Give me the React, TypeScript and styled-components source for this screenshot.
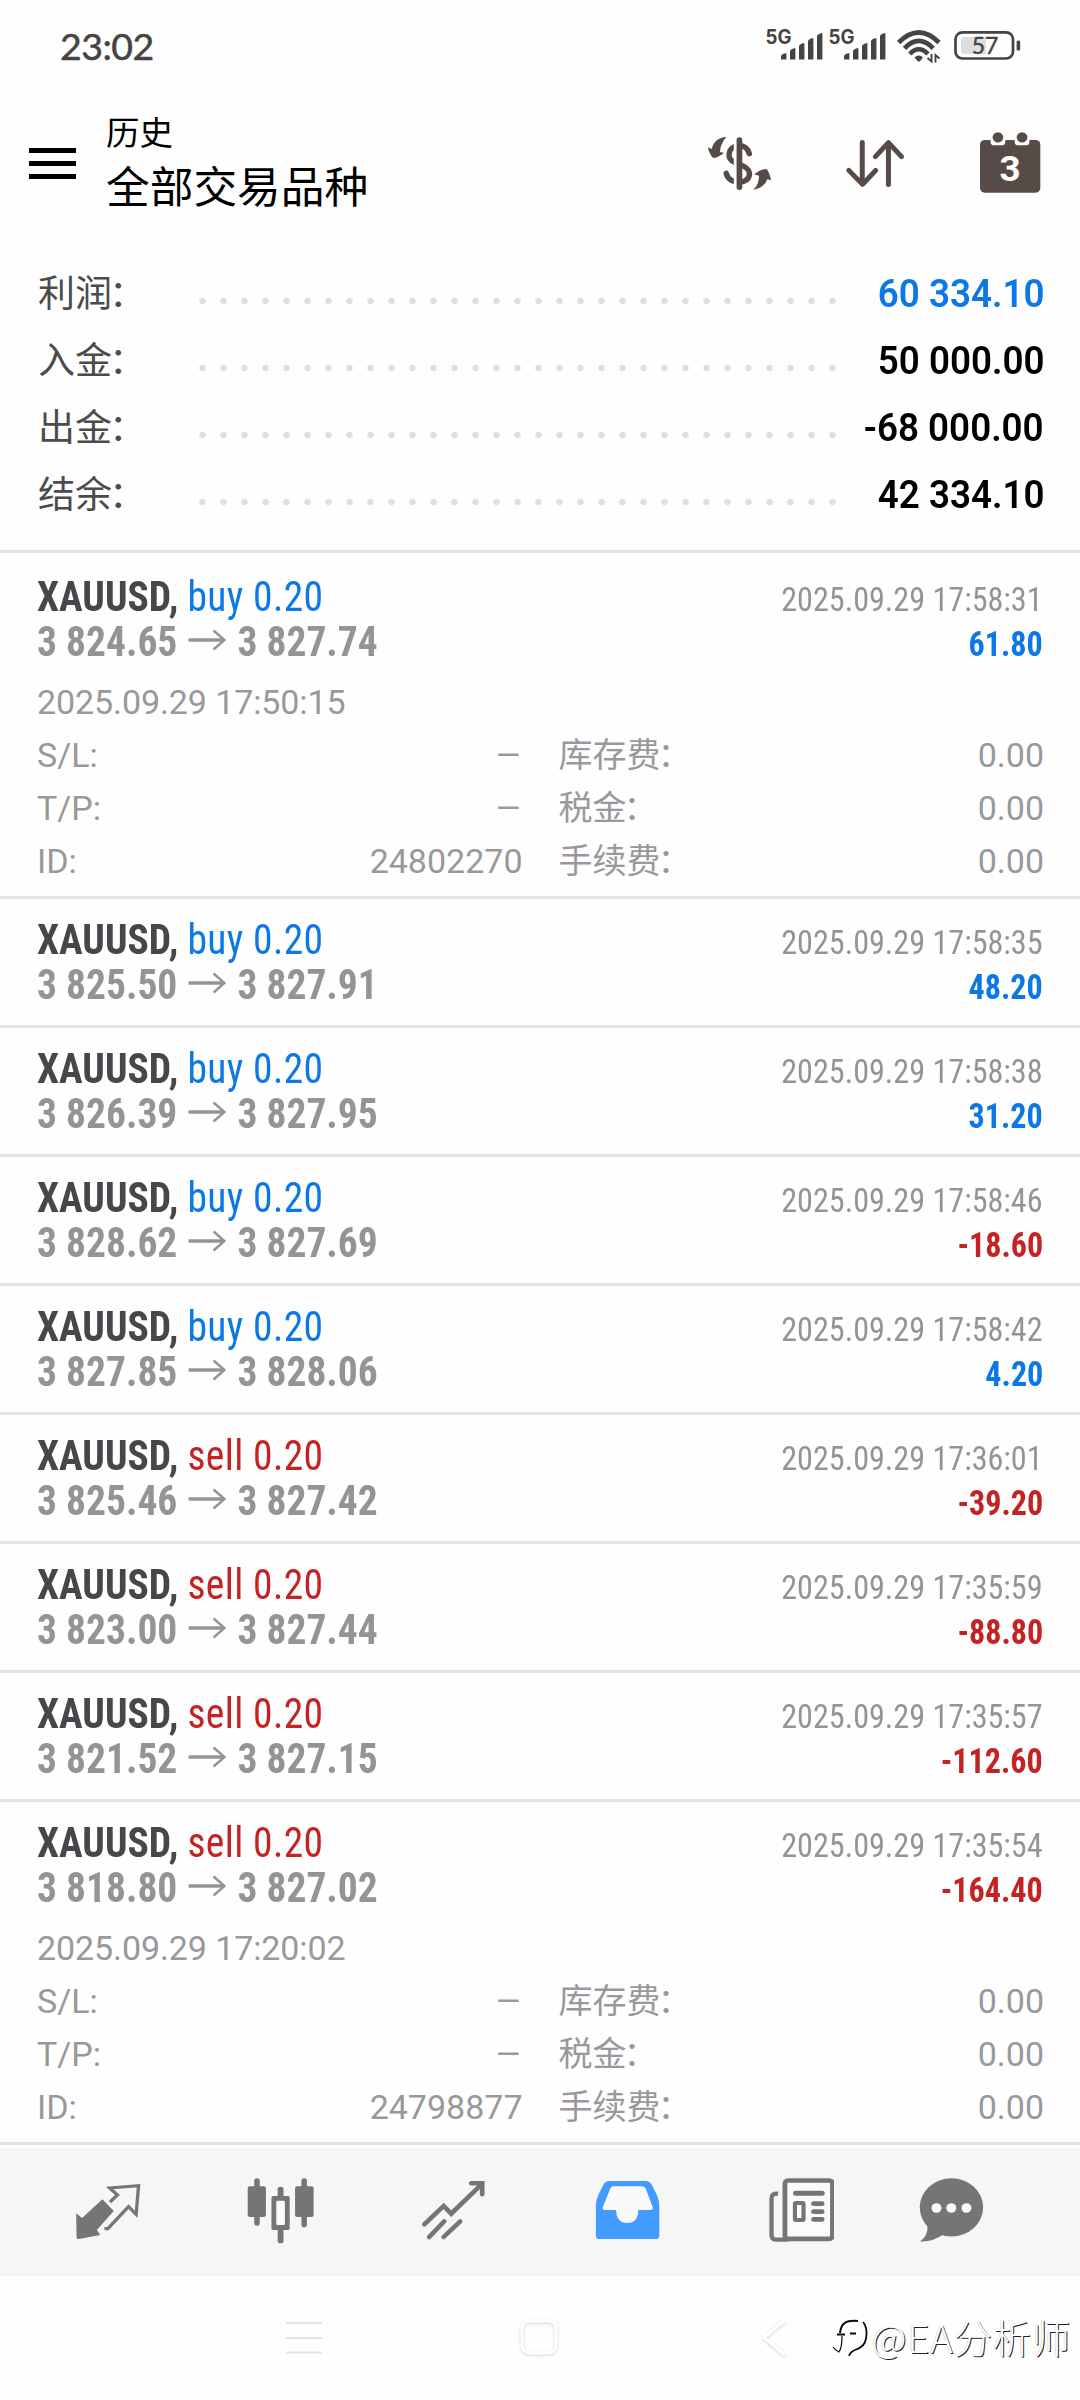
import React from 'react';
import styled, { createGlobalStyle } from 'styled-components';

const CJK = '"Noto Sans CJK SC", sans-serif';
const BG = '#fefefe';
const BLUE = '#0b78e6';
const RED = '#c42323';
const GRAY = '#949496';
const HEAD_ICON = '#574b48';
const NAV_ICON = '#757575';

const Global = createGlobalStyle`
  * { box-sizing: border-box; }
  body { margin: 0; background: ${BG}; font-family: Roboto, ${CJK}; }
`;

const Screen = styled.div`
  width: 1080px;
  height: 2400px;
  background: ${BG};
  display: flex;
  flex-direction: column;
  overflow: hidden;
`;

const StatusBar = styled.div`
  height: 100px;
  padding: 20px 50px 0 60px;
  display: flex;
  justify-content: space-between;
  align-items: flex-start;
`;
const Clock = styled.div`
  font: 400 37.5px/51px Lato, sans-serif;
  letter-spacing: -0.5px;
  color: #444;
  -webkit-text-stroke: 0.5px #444;
`;

const Header = styled.header`
  height: 127px;
  padding: 0 3px 0 29px;
  display: flex;
  align-items: center;
`;
const Burger = styled.div`
  width: 47px;
  display: flex;
  flex-direction: column;
  gap: 8px;
`;
const Bar = styled.i`
  height: 5px;
  background: #000;
`;
const Titles = styled.div`
  margin-left: 30px;
  padding-bottom: 8px;
  flex: 1;
  color: #000;
  font-family: ${CJK};
`;
const Caption = styled.div`
  font-size: 33.5px;
  line-height: 50px;
`;
const Title = styled.div`
  font-size: 43.7px;
  line-height: 57px;
`;
const Action = styled.div`
  width: 135px;
  display: flex;
  justify-content: center;
`;

const Summary = styled.section`
  height: 326px;
  padding: 33px 36px 0;
  border-bottom: 3px solid #e3e3e3;
`;
const SummaryRow = styled.div`
  display: flex;
  height: 67px;
  line-height: 67px;
  align-items: baseline;
`;
const SummaryLabel = styled.span`
  width: 156px;
  padding-left: 2px;
  font-size: 37px;
  color: #4b4b4d;
`;
const Colon = styled.span`
  margin-left: -3px;
`;
const Dots = styled.span`
  width: 651px;
  height: 67px;
  align-self: stretch;
  background: radial-gradient(circle at center, #dedede 2.8px, transparent 3.7px) 0 37px / 21px 8px repeat-x;
`;
const SummaryValue = styled.span<{ $color: string }>`
  margin-left: auto;
  font-size: 38.5px;
  font-weight: 600;
  color: ${p => p.$color};
  transform: scaleX(0.955);
  transform-origin: right;
`;

const Deal = styled.article<{ $first?: boolean; $open?: boolean }>`
  height: ${p => (p.$open ? 343 : 129)}px;
  padding: 18px 37px 0;
  border-top: 3px solid ${p => (p.$first ? 'transparent' : '#e3e3e3')};
`;
const Line = styled.div`
  display: flex;
  justify-content: space-between;
  align-items: baseline;
  height: 45px;
  line-height: 45px;
  font-family: "Roboto Condensed", Roboto, sans-serif;
  font-size: 42px;
  white-space: pre;
`;
const Left = styled.span`
  transform: scaleX(0.94);
  transform-origin: left;
`;
const Symbol = styled.b`
  color: #47474b;
`;
const Side = styled.span<{ $color: string }>`
  letter-spacing: 0.4px;
  color: ${p => p.$color};
`;
const Prices = styled.b`
  color: #949496;
`;
const Arrow = styled.svg`
  width: 40px;
  height: 22px;
  margin: 0 12px;
  vertical-align: 5px;
`;
const CloseTime = styled.span`
  font-size: 34px;
  color: ${GRAY};
  transform: scaleX(0.945);
  transform-origin: right;
`;
const Profit = styled.b<{ $color: string }>`
  font-size: 34.5px;
  color: ${p => p.$color};
  transform: scaleX(0.93);
  transform-origin: right;
`;

const Details = styled.div`
  margin-top: 12px;
  margin-right: -1px;
  display: grid;
  grid-template-columns: 1fr 1fr;
  grid-auto-rows: 53px;
  column-gap: 36px;
  font-size: 34px;
  line-height: 53px;
  color: #99999b;
`;
const OpenTime = styled.div`
  grid-column: 1 / -1;
  letter-spacing: -0.1px;
`;
const Field = styled.div`
  display: flex;
  justify-content: space-between;
  align-items: baseline;
`;
const Dash = styled.span`
  transform: scaleX(1.22);
  transform-origin: right;
`;

const TabBar = styled.nav`
  height: 134px;
  border-top: 3px solid #e0e0e0;
  padding: 0 0 2px 21.5px;
  display: flex;
  align-items: center;
  background: linear-gradient(#fdfdfd 3px, #f6f6f6 3px);
`;
const Tab = styled.div<{ $w?: number }>`
  width: ${p => p.$w || 173}px;
  display: flex;
  justify-content: center;
  padding-top: 2px;
`;
const SystemNav = styled.div`
  position: relative;
  flex: 1;
  padding: 0 0 1px 186.5px;
  display: grid;
  grid-template-columns: repeat(3, 235px);
  place-items: center;
`;
const Soft = styled.svg`
  filter: drop-shadow(0 1px 1.5px rgba(0, 0, 0, 0.18));
`;
const Watermark = styled.div`
  position: absolute;
  right: 9px;
  top: 32px;
  display: flex;
  align-items: center;
  gap: 3px;
  font: 300 38.5px/56px ${CJK};
  letter-spacing: 0.7px;
  color: #fff;
  text-shadow: 1px 1px 0 #222, -0.5px -0.5px 0 #ccc;
`;

const icon = (x: number, y: number, h: number) => ({
  viewBox: `${x} ${y} 200 ${h}`,
  width: 68.9,
  height: h / 3,
  preserveAspectRatio: 'none',
});

const Signal = ({ x }: { x: number }) => (
  <g fill="#444">
    <text x={x - 15.5} y="44" fontFamily="Inter, sans-serif" fontWeight="700" fontSize="19.5" textLength="26" lengthAdjust="spacingAndGlyphs">5G</text>
    {[53, 48, 43, 38, 33].map((top, i) => {
      const l = x + i * 9;
      return <path key={top} d={`M${l} 59.5V${top + 3}Q${l + 1} ${top + 0.5} ${l + 5.4} ${top}V59.5Z`} />;
    })}
  </g>
);

const StatusIcons = () => (
  <svg width="270" height="50" viewBox="760 20 270 50">
    <Signal x={781} />
    <Signal x={844} />
    <g fill="none" stroke="#444" strokeWidth="4.6">
      <path d="M898.6 42.5Q918.8 22.5 939 42.5" />
      <path d="M904.5 48.3Q918.8 33.5 933.2 48.3" />
      <path d="M909.8 54Q918.8 44.5 928 54" />
    </g>
    <path d="M914.5 57.5Q918.8 53.5 923 57.5L919.8 61.3Q918.8 62 917.8 61.3Z" fill="#444" />
    <path d="M931.5 54V61.5L927.5 58M935.5 62.5V55L939.5 58.5" fill="none" stroke="#444" strokeWidth="1.9" />
    <rect x="955.5" y="32.3" width="57.5" height="26.2" rx="7" fill="none" stroke="#444" strokeWidth="2.7" />
    <path d="M965 37H986V54H965Q961 54 961 50V41Q961 37 965 37Z" fill="#dedede" />
    <rect x="1016.6" y="40.5" width="3.6" height="10" rx="1.6" fill="#444" />
    <text x="985" y="54" textAnchor="middle" fontFamily="Lato, sans-serif" fontSize="23" fill="#444" stroke="#444" strokeWidth="0.4">57</text>
  </svg>
);

const MoneyIcon = () => (
  <svg {...icon(479.3, 393, 195)} fill={HEAD_ICON}>
    <path d="M608 461C603 444 592 437 578 437C544 438 540 479 566 487L592 499C618 512 612 545 580 546C558 546 545 536 541 520" fill="none" stroke={HEAD_ICON} strokeWidth="16" strokeLinecap="round" />
    <rect x="563" y="410" width="12" height="162" fill={BG} />
    <rect x="571" y="412" width="16.500" height="158" rx="8" />
    <path d="M541 411C520 412 503 425 499 447L488 442C490 458 497 468 503 474C515 474 525 465 535 459L523 456C523 440 530 425 541 411Z" />
    <path d="M619 569C640 565 655 555 660 538L671 541C668 525 665 515 658 507C645 507 632 515 622 523L636 527C636 545 630 560 619 569Z" />
  </svg>
);
const SortIcon = () => (
  <svg {...icon(871.4, 393, 195)} fill="none" stroke={HEAD_ICON} strokeWidth="14.500" strokeLinecap="round" strokeLinejoin="round">
    <path d="M936 427V552M897 511L937 553L975 511M1012 554V428M974 470L1012 428L1050 470" />
  </svg>
);
const CalendarIcon = () => (
  <svg {...icon(1263.4, 393, 195)} fill={HEAD_ICON}>
    <rect x="1278" y="420" width="175" height="158" rx="14" />
    {[1330, 1400].map(x => (
      <g key={x}>
        <rect x={x - 21.500} y="400" width="43" height="36" rx="11" fill={BG} />
        <circle cx={x} cy="412" r="15.500" />
      </g>
    ))}
    <text x="1365.500" y="544" textAnchor="middle" fontFamily="Roboto, sans-serif" fontWeight="700" fontSize="107" fill="#fff">3</text>
  </svg>
);

const QuotesIcon = () => (
  <svg {...icon(213.6, 138, 210)}>
    <path d="M296 208L329 243L280 300L290 315L228 327Q220 327 221 320L220 250L237 264Z" fill={NAV_ICON} />
    <path d="M318 216L340 195L317 174L401 167L394 253L372 230L312 296H302" fill="none" stroke={NAV_ICON} strokeWidth="9.500" />
  </svg>
);
const ChartIcon = () => (
  <svg {...icon(716, 138, 210)} fill={NAV_ICON}>
    <rect x="737" y="145" width="16" height="142" rx="8" />
    <rect x="718" y="169" width="53" height="92" rx="6" />
    <rect x="874" y="145" width="16" height="147" rx="8" />
    <rect x="855.500" y="169" width="54" height="92" rx="6" />
    <rect x="805" y="170" width="17" height="170" rx="8" />
    <rect x="787" y="198" width="53" height="102" rx="5" />
    <rect x="801" y="212" width="25" height="73" rx="4" fill="#fbfbfb" />
  </svg>
);
const TrendIcon = () => (
  <svg {...icon(1218.4, 138, 210)} fill="none" stroke={NAV_ICON} strokeWidth="13.500" strokeLinecap="round">
    <path d="M1231 283L1287 228L1309 251L1397 163M1245 321L1289 274M1287 321L1335 274" />
    <path d="M1367 160H1399V193" strokeLinejoin="miter" />
  </svg>
);
const InboxIcon = () => (
  <svg {...icon(152.6, 138, 210)}>
    <path d="M198 153H308Q317 154 322 162L338 195Q345 210 345 225V317Q345 327 335 327H171Q161 327 161 317V225Q162 208 168 195L184 162Q189 153 198 153Z" fill="#429bff" />
    <path d="M213 169H294Q304 170 307 179L326 232Q327 240 319 240H284C284 265 274 279 252 279C230 279 220 265 220 240H187Q179 240 181 232L202 178Q205 169 213 169Z" fill="#fafafa" />
  </svg>
);
const NewsIcon = () => (
  <svg {...icon(655, 138, 210)} fill="none" stroke={NAV_ICON} strokeLinecap="round">
    <path d="M690 191Q671 189 671 205V316Q671 329 684 329H720" strokeWidth="12.500" strokeLinecap="butt" />
    <rect x="710" y="151.500" width="138" height="175" rx="9" strokeWidth="14" fill="#fbfbfb" />
    <path d="M741 190H818" strokeWidth="15" />
    <rect x="739" y="219" width="25" height="51" rx="3" strokeWidth="12" />
    <path d="M793 221H818M793 245H818M793 268H818" strokeWidth="14" />
  </svg>
);
const ChatIcon = () => (
  <svg {...icon(1093.5, 138, 210)} fill={NAV_ICON}>
    <ellipse cx="1193.500" cy="232" rx="92" ry="87.500" />
    <path d="M1122 275Q1130 315 1102 334Q1140 336 1172 312Z" />
    {[1150, 1193, 1237].map(x => <circle key={x} cx={x} cy="234" r="14.500" fill="#fbfbfb" />)}
  </svg>
);

const summary: [string, string, string][] = [
  ['利润', '60 334.10', BLUE],
  ['入金', '50 000.00', '#000'],
  ['出金', '-68 000.00', '#000'],
  ['结余', '42 334.10', '#000'],
];

interface Trade {
  side: 'buy' | 'sell';
  from: string;
  to: string;
  closed: string;
  profit: string;
  opened?: string;
  id?: string;
}
const trades: Trade[] = [
  { side: 'buy', from: '3 824.65', to: '3 827.74', closed: '17:58:31', profit: '61.80', opened: '17:50:15', id: '24802270' },
  { side: 'buy', from: '3 825.50', to: '3 827.91', closed: '17:58:35', profit: '48.20' },
  { side: 'buy', from: '3 826.39', to: '3 827.95', closed: '17:58:38', profit: '31.20' },
  { side: 'buy', from: '3 828.62', to: '3 827.69', closed: '17:58:46', profit: '-18.60' },
  { side: 'buy', from: '3 827.85', to: '3 828.06', closed: '17:58:42', profit: '4.20' },
  { side: 'sell', from: '3 825.46', to: '3 827.42', closed: '17:36:01', profit: '-39.20' },
  { side: 'sell', from: '3 823.00', to: '3 827.44', closed: '17:35:59', profit: '-88.80' },
  { side: 'sell', from: '3 821.52', to: '3 827.15', closed: '17:35:57', profit: '-112.60' },
  { side: 'sell', from: '3 818.80', to: '3 827.02', closed: '17:35:54', profit: '-164.40', opened: '17:20:02', id: '24798877' },
];

const Fee = ({ name }: { name: string }) => (
  <Field><span>{name}<Colon>：</Colon></span><span>0.00</span></Field>
);

const DealRow = ({ t, first }: { t: Trade; first: boolean }) => (
  <Deal $first={first} $open={!!t.id}>
    <Line>
      <Left><Symbol>XAUUSD, </Symbol><Side $color={t.side === 'buy' ? BLUE : RED}>{t.side} 0.20</Side></Left>
      <CloseTime>{`2025.09.29 ${t.closed}`}</CloseTime>
    </Line>
    <Line>
      <Left>
        <Prices>
          {t.from}
          <Arrow viewBox="0 0 38 22" preserveAspectRatio="none" fill="none" stroke={GRAY}>
            <path d="M0 11H36" strokeWidth="3.600" />
            <path d="M25.500 1.500L36.500 11L25.500 20.500" strokeWidth="2.500" />
          </Arrow>
          {t.to}
        </Prices>
      </Left>
      <Profit $color={t.profit.startsWith('-') ? RED : BLUE}>{t.profit}</Profit>
    </Line>
    {t.id && (
      <Details>
        <OpenTime>{`2025.09.29 ${t.opened}`}</OpenTime>
        <Field><span>S/L:</span><Dash>–</Dash></Field>
        <Fee name="库存费" />
        <Field><span>T/P:</span><Dash>–</Dash></Field>
        <Fee name="税金" />
        <Field><span>ID:</span><span>{t.id}</span></Field>
        <Fee name="手续费" />
      </Details>
    )}
  </Deal>
);

export default function App() {
  return (
    <Screen>
      <Global />
      <StatusBar>
        <Clock>23:02</Clock>
        <StatusIcons />
      </StatusBar>
      <Header>
        <Burger><Bar /><Bar /><Bar /></Burger>
        <Titles>
          <Caption>历史</Caption>
          <Title>全部交易品种</Title>
        </Titles>
        <Action><MoneyIcon /></Action>
        <Action><SortIcon /></Action>
        <Action><CalendarIcon /></Action>
      </Header>
      <Summary>
        {summary.map(([label, value, color]) => (
          <SummaryRow key={label}>
            <SummaryLabel>{label}<Colon>：</Colon></SummaryLabel>
            <Dots />
            <SummaryValue $color={color}>{value}</SummaryValue>
          </SummaryRow>
        ))}
      </Summary>
      {trades.map((t, i) => <DealRow key={t.closed} t={t} first={i === 0} />)}
      <TabBar>
        <Tab><QuotesIcon /></Tab>
        <Tab><ChartIcon /></Tab>
        <Tab><TrendIcon /></Tab>
        <Tab><InboxIcon /></Tab>
        <Tab><NewsIcon /></Tab>
        <Tab $w={129}><ChatIcon /></Tab>
      </TabBar>
      <SystemNav>
        <svg width="38" height="34" viewBox="0 0 38 34" stroke="#e4e4e4" strokeWidth="2.200">
          <path d="M1 2H37M1 17H37M1 31.500H37" />
        </svg>
        <Soft width="42" height="40" viewBox="0 0 42 40" fill="none" stroke="#fff" strokeWidth="3">
          <rect x="4" y="3" width="34" height="32" rx="7" />
        </Soft>
        <Soft width="30" height="42" viewBox="0 0 30 42" fill="none" stroke="#fff" strokeWidth="3">
          <path d="M26 3L5 20.500L26 38" />
        </Soft>
        <Watermark>
          <svg width="38" height="40" viewBox="0 0 38 40" fill="none" stroke="#0a0a0a">
            <path d="M9 17C10 7 15 4 27 5" strokeWidth="2" />
            <path d="M32 6C37 12 37 26 30 31C25 35 20 33 18 40" strokeWidth="1.800" />
            <path d="M6 18.500H14M19 17.500H25" strokeWidth="1.800" />
            <path d="M11 20C11 27 10 33 8 36C6 35 4 34 2 31" strokeWidth="1.200" />
          </svg>
          <span>@EA分析师</span>
        </Watermark>
      </SystemNav>
    </Screen>
  );
}
